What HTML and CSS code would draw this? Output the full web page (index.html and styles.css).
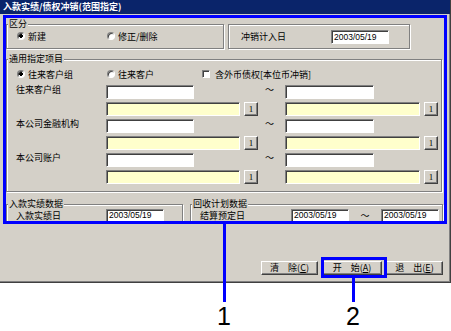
FILE: index.html
```html
<html>
<head>
<title>入款实绩/债权冲销(范围指定)</title>
<meta charset="utf-8">
<link rel="stylesheet" href="styles.css">
</head>
<body>
<div class="page">
  <div class="window">
    <div class="titlebar">入款实绩/债权冲销(范围指定)</div>
    <div class="client">

      <div class="row">
        <fieldset class="group kubun">
          <legend>区分</legend>
          <div class="choices">
            <span class="opt first"><span class="radio on"></span>新建</span>
            <span class="opt"><span class="radio"></span>修正/删除</span>
          </div>
        </fieldset>
        <div class="frame datebox">
          <span class="caption">冲销计入日</span>
          <span class="field white date">2003/05/19</span>
        </div>
      </div>

      <fieldset class="group common">
        <legend>通用指定项目</legend>
        <div class="choices">
          <span class="opt first"><span class="radio on"></span>往来客户组</span>
          <span class="opt second"><span class="radio"></span>往来客户</span>
          <span class="opt"><span class="check"></span>含外币债权[本位币冲销]</span>
        </div>
        <div class="range">
          <span class="label">往来客户组</span>
          <span class="field white code-l"></span>
          <span class="tilde">～</span>
          <span class="field white code-r"></span>
          <span class="field yellow name-l"></span>
          <span class="pick pick-l">1</span>
          <span class="field yellow name-r"></span>
          <span class="pick pick-r">1</span>

          <span class="label">本公司金融机构</span>
          <span class="field white code-l"></span>
          <span class="tilde">～</span>
          <span class="field white code-r"></span>
          <span class="field yellow name-l"></span>
          <span class="pick pick-l">1</span>
          <span class="field yellow name-r"></span>
          <span class="pick pick-r">1</span>

          <span class="label">本公司账户</span>
          <span class="field white code-l"></span>
          <span class="tilde">～</span>
          <span class="field white code-r"></span>
          <span class="field yellow name-l"></span>
          <span class="pick pick-l">1</span>
          <span class="field yellow name-r"></span>
          <span class="pick pick-r">1</span>
        </div>
      </fieldset>

      <div class="row">
        <fieldset class="group result">
          <legend>入款实绩数据</legend>
          <div class="line">
            <span class="caption wide">入款实绩日</span>
            <span class="field white date">2003/05/19</span>
          </div>
        </fieldset>
        <fieldset class="group plan">
          <legend>回收计划数据</legend>
          <div class="line">
            <span class="caption wide">结算预定日</span>
            <span class="field white date">2003/05/19</span>
            <span class="tilde small">～</span>
            <span class="field white date">2003/05/19</span>
          </div>
        </fieldset>
      </div>

      <div class="buttons">
        <span class="button clear">清　除(<u>C</u>)</span>
        <span class="button start">开　始(<u>A</u>)</span>
        <span class="button quit">退　出(<u>E</u>)</span>
      </div>
    </div>
  </div>

  <div class="mark mark-area"></div>
  <div class="mark lead lead-1"></div>
  <div class="num num-1">1</div>
  <div class="mark mark-btn"></div>
  <div class="mark lead lead-2"></div>
  <div class="num num-2">2</div>
</div>
</body>
</html>
```

FILE: styles.css
```css
body{
    margin: 0;
    background: #fff;
    font-family: "Noto Sans CJK SC", "Liberation Sans", sans-serif;
    font-size: 9px;
    color: #000;
}

.page{
    position: relative;
    width: 451px;
    height: 331px;
}

.window{
    width: 451px;
    height: 283px;
    box-sizing: border-box;
    background: #d4d0c8;
    border-right: 1px solid #404040;
    border-bottom: 1px solid #404040;
    box-shadow: inset -1px -1px 0 #808080;
}

.titlebar{
    height: 14px;
    line-height: 14px;
    padding-left: 3px;
    background: #0a246a;
    color: #fff;
    font-weight: bold;
    white-space: nowrap;
}

.client{
    padding: 5px 0 0 6px;
}

.row{
    display: flex;
    align-items: flex-start;
}

/* etched group boxes */
.group, .frame{
    margin: 0;
    padding: 0;
    min-width: 0;
    box-sizing: border-box;
    border: 1px solid #808080;
    box-shadow: inset 1px 1px 0 #fff, 1px 1px 0 #fff;
}

.group legend{
    height: 10px;
    line-height: 10px;
    padding: 0 1px;
    margin-left: 1px;
    background: #d4d0c8;
}

.choices{
    display: flex;
    align-items: center;
    height: 12px;
}

.opt{
    display: flex;
    align-items: center;
    white-space: nowrap;
}

.opt.first{ width: 90px; }
.opt.second{ width: 95px; }

.radio{
    width: 8px;
    height: 8px;
    box-sizing: border-box;
    margin-right: 3px;
    border-radius: 50%;
    border: 1px solid;
    border-color: #808080 #fff #fff #808080;
    background: #fff;
    box-shadow: inset 1px 1px 0 #404040;
}

.radio.on{
    background: radial-gradient(circle, #000 0 1.6px, #fff 1.8px);
}

.check{
    width: 8px;
    height: 8px;
    box-sizing: border-box;
    margin-right: 5px;
    border: 1px solid;
    border-color: #808080 #fff #fff #808080;
    background: #fff;
    box-shadow: inset 1px 1px 0 #404040;
}

/* sunken text fields */
.field{
    display: block;
    height: 14px;
    box-sizing: border-box;
    border: 1px solid;
    border-color: #808080 #fff #fff #808080;
    box-shadow: inset 1px 1px 0 #404040;
    font-family: "Liberation Sans", sans-serif;
    font-size: 8.5px;
    line-height: 12px;
    padding-left: 2px;
    white-space: nowrap;
}

.white{ background: #fff; }
.yellow{ background: #ffffcc; }

.date{ width: 58px; }

.pick{
    width: 14px;
    height: 14px;
    box-sizing: border-box;
    border: 1px solid;
    border-color: #fff #404040 #404040 #fff;
    box-shadow: inset -1px -1px 0 #808080;
    font-family: "Liberation Serif", serif;
    font-size: 9px;
    line-height: 12px;
    text-align: center;
}

.tilde{
    line-height: 10px;
    text-align: center;
    padding-right: 4px;
}

/* 区分 */
.kubun{
    width: 218px;
}

.kubun .choices{
    margin: 1px 0 6px 10px;
}

.datebox{
    width: 182px;
    height: 25px;
    margin: 5px 0 0 4px;
    display: flex;
    align-items: center;
    padding-left: 12px;
}

.caption{
    width: 90px;
    white-space: nowrap;
}

/* 通用指定项目 */
.common{
    width: 436px;
    margin-top: 5px;
}

.common .choices{
    margin: 4px 0 5px 10px;
}

.range{
    display: grid;
    grid-template-columns: 90px 138px 14px 27px 139px 14px;
    grid-auto-rows: 14px;
    row-gap: 3px;
    margin: 0 0 7px 9px;
}

.label{
    grid-column: 1;
    line-height: 10px;
    white-space: nowrap;
}

.code-l{ grid-column: 2; width: 88px; }
.name-l{ grid-column: 2; width: 134px; }
.pick-l{ grid-column: 3; }
.range .tilde{ grid-column: 4; }
.code-r{ grid-column: 5; width: 89px; }
.name-r{ grid-column: 5; width: 135px; }
.pick-r{ grid-column: 6; }

/* 下段 */
.result{
    width: 177px;
    margin-top: 7px;
}

.plan{
    width: 253px;
    margin: 7px 0 0 7px;
}

.line{
    display: flex;
    align-items: center;
    height: 13px;
    padding-left: 9px;
}

.line .field{
    height: 13px;
    line-height: 11px;
}

.plan .line .caption{ width: 91px; }

.tilde.small{
    width: 32px;
    padding: 0;
}

/* command buttons */
.buttons{
    display: flex;
    justify-content: flex-end;
    gap: 4px;
    margin: 38px 7px 0 0;
}

.button{
    height: 14px;
    box-sizing: border-box;
    border: 1px solid;
    border-color: #fff #404040 #404040 #fff;
    box-shadow: inset -1px -1px 0 #808080;
    line-height: 12px;
    text-align: center;
    white-space: nowrap;
}

.clear{ width: 57px; }
.start{ width: 60px; }
.quit{ width: 57px; }

/* call-outs */
.mark{
    position: absolute;
    box-sizing: border-box;
    border: 3px solid #0000ff;
}

.mark-area{
    left: 3px;
    top: 15px;
    width: 444px;
    height: 209px;
}

.mark-btn{
    left: 321px;
    top: 257px;
    width: 66px;
    height: 21px;
}

.lead{
    border: none;
    width: 3px;
    background: #0000ff;
}

.lead-1{
    left: 223px;
    top: 223px;
    height: 79px;
}

.lead-2{
    left: 352px;
    top: 277px;
    height: 25px;
}

.num{
    position: absolute;
    top: 304px;
    font-family: "Liberation Sans", sans-serif;
    font-size: 25px;
    line-height: 25px;
}

.num-1{ left: 217px; }
.num-2{ left: 346px; }
```
